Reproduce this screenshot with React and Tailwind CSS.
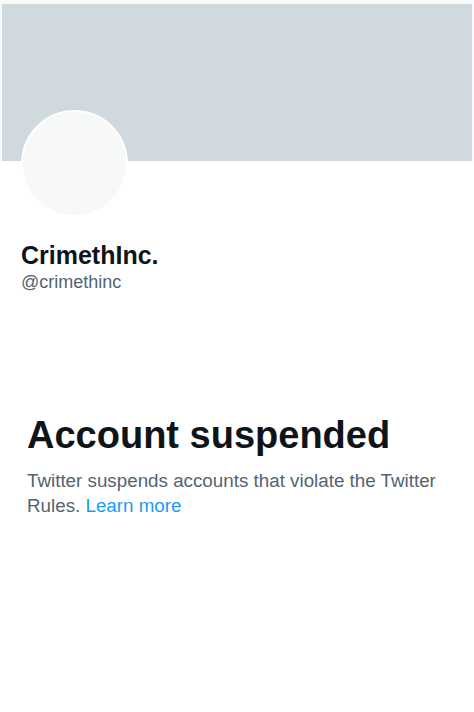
import React from 'react';

export default function App() {
  return (
    <div className="min-h-screen w-[474px] bg-white font-['Liberation_Sans',Arial,sans-serif] text-[#0f1419]">
      {/* Banner */}
      <div className="px-[2px] pt-[4px] bg-[#f9fafa]">
        <div className="h-[157px] bg-[#cfd9de]" />
      </div>

      {/* Avatar + names */}
      <div className="px-[21px]">
        <div className="-mt-[51px] h-[107px] w-[107px] rounded-full border-[2px] border-white bg-[#f7f9f9]" />
        <div className="mt-[23px] text-[25px] font-bold leading-[30px]">CrimethInc.</div>
        <div className="mt-[1px] text-[18px] leading-[22px] text-[#536471]">@crimethinc</div>
      </div>

      {/* Suspended notice */}
      <div className="px-[27px] pt-[120px]">
        <h1 className="text-[38px] font-bold leading-[44px]">Account suspended</h1>
        <p className="mt-[11px] text-[18.8px] leading-[25px] text-[#536471]">
          Twitter suspends accounts that violate the Twitter Rules.{' '}
          <a href="#" className="text-[#1d9bf0]">Learn more</a>
        </p>
      </div>
    </div>
  );
}
